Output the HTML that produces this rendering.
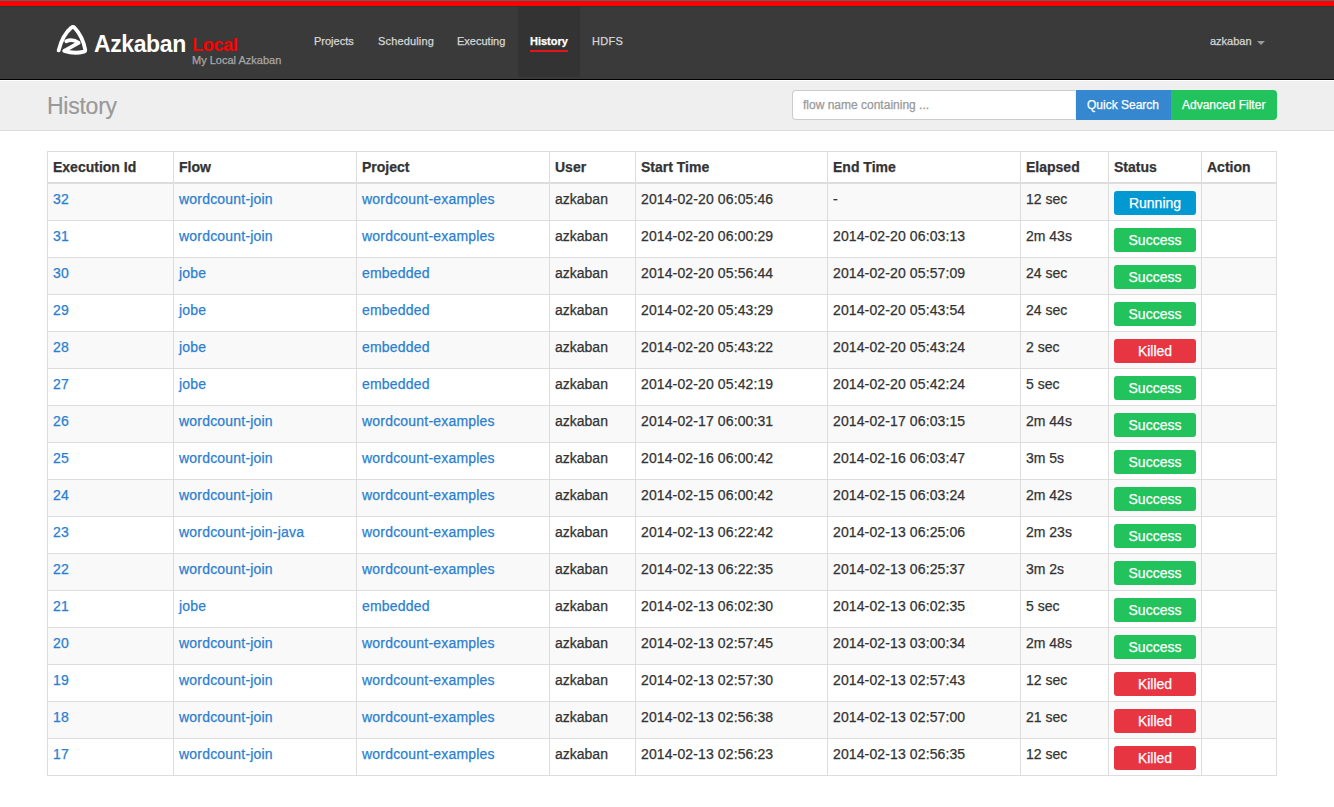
<!DOCTYPE html>
<html><head><meta charset="utf-8"><title>Azkaban History</title>
<style>
html,body{margin:0;padding:0;background:#fff;width:1334px;height:807px;overflow:hidden;position:relative;font-family:"Liberation Sans",sans-serif;}
.b{position:absolute}
.hl{left:47px;width:1230px;height:1px;background:#ddd}
.t{position:absolute;white-space:nowrap;font-size:14px;line-height:20px;-webkit-text-stroke:0.25px currentColor}
.th{font-weight:bold;color:#333;}
.a{color:#2a7fd0;letter-spacing:0.2px}
.d{color:#333}
.dt{letter-spacing:0.12px}
.lab{-webkit-text-stroke:0.25px currentColor;position:absolute;left:1114px;width:82px;height:24px;border-radius:3px;color:#fff;font-size:14px;line-height:24px;text-align:center;white-space:nowrap}
.nav{-webkit-text-stroke:0.25px currentColor;position:absolute;top:34px;font-size:11px;line-height:14px;color:#d6d6d6;white-space:nowrap}
</style></head><body>
<div class="b" style="left:0;top:0;width:1334px;height:1px;background:#506a6a"></div>
<div class="b" style="left:0;top:1px;width:1334px;height:5px;background:#ff0000"></div>
<div class="b" style="left:0;top:6px;width:1334px;height:1px;background:#263636"></div>
<div class="b" style="left:0;top:7px;width:1334px;height:72px;background:#3a3a3a"></div>
<div class="b" style="left:0;top:79px;width:1334px;height:1px;background:#000"></div>
<div class="b" style="left:0;top:80px;width:1334px;height:1px;background:#fff"></div>
<div class="b" style="left:0;top:81px;width:1334px;height:49px;background:#efefef"></div>
<div class="b" style="left:0;top:130px;width:1334px;height:1px;background:#ddd"></div>
<div class="b" style="left:518px;top:7px;width:62px;height:70px;background:#333"></div>
<div class="b" style="left:530px;top:50px;width:38px;height:2px;background:#e5141b"></div>
<svg class="b" style="left:0;top:0" width="100" height="70" viewBox="0 0 100 70">
<path d="M 58.6 50.4 C 60.8 42 64.8 33 71.2 27.8 Q 73 26.2 74.6 27.8 C 79.5 33 83.5 41 85.2 49.6 Q 85.5 51.2 83.8 51.6 Q 74.75 54.2 64.2 50.9 L 78.6 42.9 Q 72.5 38.4 66.3 41.2" fill="none" stroke="#fff" stroke-width="3.8" stroke-linecap="round" stroke-linejoin="round"/>
</svg>
<div class="t" style="left:94px;top:31px;font-size:23px;letter-spacing:-0.4px;line-height:26px;font-weight:bold;color:#fff;-webkit-text-stroke:0">Azkaban</div>
<div class="t" style="left:192px;top:35px;font-size:18px;letter-spacing:-0.3px;line-height:20px;font-weight:bold;color:#f00;-webkit-text-stroke:0">Local</div>
<div class="t" style="left:192px;top:53px;font-size:11px;line-height:14px;color:#a8a8a8">My Local Azkaban</div>
<div class="nav" style="left:314px">Projects</div>
<div class="nav" style="left:378px;letter-spacing:0.15px">Scheduling</div>
<div class="nav" style="left:457px">Executing</div>
<div class="nav" style="left:530px;color:#fff;font-weight:bold">History</div>
<div class="nav" style="left:592px;letter-spacing:0.3px">HDFS</div>
<div class="nav" style="left:1210px">azkaban</div>
<div class="b" style="left:1257px;top:41px;width:0;height:0;border-left:4px solid transparent;border-right:4px solid transparent;border-top:4px solid #999"></div>
<div class="t" style="left:47px;top:91px;font-size:23px;letter-spacing:-0.25px;line-height:30px;color:#999;-webkit-text-stroke:0.15px #999">History</div>
<div class="b" style="left:792px;top:90px;width:282px;height:28px;background:#fff;border:1px solid #ccc;border-right:0;border-radius:4px 0 0 4px"></div>
<div class="t" style="left:803px;top:97px;font-size:12px;line-height:16px;color:#999">flow name containing ...</div>
<div class="b" style="left:1076px;top:90px;width:95px;height:30px;background:#3588d0"></div>
<div class="b" style="left:1171px;top:90px;width:106px;height:30px;background:#22c25c;border-radius:0 4px 4px 0"></div>
<div class="t" style="left:1087px;top:97px;font-size:12px;line-height:16px;color:#fff">Quick Search</div>
<div class="t" style="left:1182px;top:97px;font-size:12px;line-height:16px;color:#fff">Advanced Filter</div>
<div class="b" style="left:48px;top:184px;width:1228px;height:36px;background:#f9f9f9"></div>
<div class="b hl" style="top:220px"></div>
<div class="b hl" style="top:257px"></div>
<div class="b" style="left:48px;top:258px;width:1228px;height:36px;background:#f9f9f9"></div>
<div class="b hl" style="top:294px"></div>
<div class="b hl" style="top:331px"></div>
<div class="b" style="left:48px;top:332px;width:1228px;height:36px;background:#f9f9f9"></div>
<div class="b hl" style="top:368px"></div>
<div class="b hl" style="top:405px"></div>
<div class="b" style="left:48px;top:406px;width:1228px;height:36px;background:#f9f9f9"></div>
<div class="b hl" style="top:442px"></div>
<div class="b hl" style="top:479px"></div>
<div class="b" style="left:48px;top:480px;width:1228px;height:36px;background:#f9f9f9"></div>
<div class="b hl" style="top:516px"></div>
<div class="b hl" style="top:553px"></div>
<div class="b" style="left:48px;top:554px;width:1228px;height:36px;background:#f9f9f9"></div>
<div class="b hl" style="top:590px"></div>
<div class="b hl" style="top:627px"></div>
<div class="b" style="left:48px;top:628px;width:1228px;height:36px;background:#f9f9f9"></div>
<div class="b hl" style="top:664px"></div>
<div class="b hl" style="top:701px"></div>
<div class="b" style="left:48px;top:702px;width:1228px;height:36px;background:#f9f9f9"></div>
<div class="b hl" style="top:738px"></div>
<div class="b hl" style="top:775px"></div>
<div class="b hl" style="top:151px"></div>
<div class="b hl" style="top:182px;height:2px"></div>
<div class="b" style="left:47px;top:151px;width:1px;height:625px;background:#ddd"></div>
<div class="b" style="left:173px;top:151px;width:1px;height:625px;background:#ddd"></div>
<div class="b" style="left:356px;top:151px;width:1px;height:625px;background:#ddd"></div>
<div class="b" style="left:549px;top:151px;width:1px;height:625px;background:#ddd"></div>
<div class="b" style="left:635px;top:151px;width:1px;height:625px;background:#ddd"></div>
<div class="b" style="left:827px;top:151px;width:1px;height:625px;background:#ddd"></div>
<div class="b" style="left:1020px;top:151px;width:1px;height:625px;background:#ddd"></div>
<div class="b" style="left:1108px;top:151px;width:1px;height:625px;background:#ddd"></div>
<div class="b" style="left:1201px;top:151px;width:1px;height:625px;background:#ddd"></div>
<div class="b" style="left:1276px;top:151px;width:1px;height:625px;background:#ddd"></div>
<div class="t th" style="left:53px;top:157px;">Execution Id</div>
<div class="t th" style="left:179px;top:157px;">Flow</div>
<div class="t th" style="left:362px;top:157px;">Project</div>
<div class="t th" style="left:555px;top:157px;">User</div>
<div class="t th" style="left:641px;top:157px;">Start Time</div>
<div class="t th" style="left:833px;top:157px;">End Time</div>
<div class="t th" style="left:1026px;top:157px;">Elapsed</div>
<div class="t th" style="left:1114px;top:157px;">Status</div>
<div class="t th" style="left:1207px;top:157px;">Action</div>
<div class="t a" style="left:53px;top:189px;">32</div>
<div class="t a" style="left:179px;top:189px;">wordcount-join</div>
<div class="t a" style="left:362px;top:189px;">wordcount-examples</div>
<div class="t d" style="left:555px;top:189px;">azkaban</div>
<div class="t d dt" style="left:641px;top:189px;">2014-02-20 06:05:46</div>
<div class="t d dt" style="left:833px;top:189px;">-</div>
<div class="t d" style="left:1026px;top:189px;">12 sec</div>
<div class="lab" style="top:191px;background:#0299d2">Running</div>
<div class="t a" style="left:53px;top:226px;">31</div>
<div class="t a" style="left:179px;top:226px;">wordcount-join</div>
<div class="t a" style="left:362px;top:226px;">wordcount-examples</div>
<div class="t d" style="left:555px;top:226px;">azkaban</div>
<div class="t d dt" style="left:641px;top:226px;">2014-02-20 06:00:29</div>
<div class="t d dt" style="left:833px;top:226px;">2014-02-20 06:03:13</div>
<div class="t d" style="left:1026px;top:226px;">2m 43s</div>
<div class="lab" style="top:228px;background:#22c25c">Success</div>
<div class="t a" style="left:53px;top:263px;">30</div>
<div class="t a" style="left:179px;top:263px;">jobe</div>
<div class="t a" style="left:362px;top:263px;">embedded</div>
<div class="t d" style="left:555px;top:263px;">azkaban</div>
<div class="t d dt" style="left:641px;top:263px;">2014-02-20 05:56:44</div>
<div class="t d dt" style="left:833px;top:263px;">2014-02-20 05:57:09</div>
<div class="t d" style="left:1026px;top:263px;">24 sec</div>
<div class="lab" style="top:265px;background:#22c25c">Success</div>
<div class="t a" style="left:53px;top:300px;">29</div>
<div class="t a" style="left:179px;top:300px;">jobe</div>
<div class="t a" style="left:362px;top:300px;">embedded</div>
<div class="t d" style="left:555px;top:300px;">azkaban</div>
<div class="t d dt" style="left:641px;top:300px;">2014-02-20 05:43:29</div>
<div class="t d dt" style="left:833px;top:300px;">2014-02-20 05:43:54</div>
<div class="t d" style="left:1026px;top:300px;">24 sec</div>
<div class="lab" style="top:302px;background:#22c25c">Success</div>
<div class="t a" style="left:53px;top:337px;">28</div>
<div class="t a" style="left:179px;top:337px;">jobe</div>
<div class="t a" style="left:362px;top:337px;">embedded</div>
<div class="t d" style="left:555px;top:337px;">azkaban</div>
<div class="t d dt" style="left:641px;top:337px;">2014-02-20 05:43:22</div>
<div class="t d dt" style="left:833px;top:337px;">2014-02-20 05:43:24</div>
<div class="t d" style="left:1026px;top:337px;">2 sec</div>
<div class="lab" style="top:339px;background:#e83542">Killed</div>
<div class="t a" style="left:53px;top:374px;">27</div>
<div class="t a" style="left:179px;top:374px;">jobe</div>
<div class="t a" style="left:362px;top:374px;">embedded</div>
<div class="t d" style="left:555px;top:374px;">azkaban</div>
<div class="t d dt" style="left:641px;top:374px;">2014-02-20 05:42:19</div>
<div class="t d dt" style="left:833px;top:374px;">2014-02-20 05:42:24</div>
<div class="t d" style="left:1026px;top:374px;">5 sec</div>
<div class="lab" style="top:376px;background:#22c25c">Success</div>
<div class="t a" style="left:53px;top:411px;">26</div>
<div class="t a" style="left:179px;top:411px;">wordcount-join</div>
<div class="t a" style="left:362px;top:411px;">wordcount-examples</div>
<div class="t d" style="left:555px;top:411px;">azkaban</div>
<div class="t d dt" style="left:641px;top:411px;">2014-02-17 06:00:31</div>
<div class="t d dt" style="left:833px;top:411px;">2014-02-17 06:03:15</div>
<div class="t d" style="left:1026px;top:411px;">2m 44s</div>
<div class="lab" style="top:413px;background:#22c25c">Success</div>
<div class="t a" style="left:53px;top:448px;">25</div>
<div class="t a" style="left:179px;top:448px;">wordcount-join</div>
<div class="t a" style="left:362px;top:448px;">wordcount-examples</div>
<div class="t d" style="left:555px;top:448px;">azkaban</div>
<div class="t d dt" style="left:641px;top:448px;">2014-02-16 06:00:42</div>
<div class="t d dt" style="left:833px;top:448px;">2014-02-16 06:03:47</div>
<div class="t d" style="left:1026px;top:448px;">3m 5s</div>
<div class="lab" style="top:450px;background:#22c25c">Success</div>
<div class="t a" style="left:53px;top:485px;">24</div>
<div class="t a" style="left:179px;top:485px;">wordcount-join</div>
<div class="t a" style="left:362px;top:485px;">wordcount-examples</div>
<div class="t d" style="left:555px;top:485px;">azkaban</div>
<div class="t d dt" style="left:641px;top:485px;">2014-02-15 06:00:42</div>
<div class="t d dt" style="left:833px;top:485px;">2014-02-15 06:03:24</div>
<div class="t d" style="left:1026px;top:485px;">2m 42s</div>
<div class="lab" style="top:487px;background:#22c25c">Success</div>
<div class="t a" style="left:53px;top:522px;">23</div>
<div class="t a" style="left:179px;top:522px;">wordcount-join-java</div>
<div class="t a" style="left:362px;top:522px;">wordcount-examples</div>
<div class="t d" style="left:555px;top:522px;">azkaban</div>
<div class="t d dt" style="left:641px;top:522px;">2014-02-13 06:22:42</div>
<div class="t d dt" style="left:833px;top:522px;">2014-02-13 06:25:06</div>
<div class="t d" style="left:1026px;top:522px;">2m 23s</div>
<div class="lab" style="top:524px;background:#22c25c">Success</div>
<div class="t a" style="left:53px;top:559px;">22</div>
<div class="t a" style="left:179px;top:559px;">wordcount-join</div>
<div class="t a" style="left:362px;top:559px;">wordcount-examples</div>
<div class="t d" style="left:555px;top:559px;">azkaban</div>
<div class="t d dt" style="left:641px;top:559px;">2014-02-13 06:22:35</div>
<div class="t d dt" style="left:833px;top:559px;">2014-02-13 06:25:37</div>
<div class="t d" style="left:1026px;top:559px;">3m 2s</div>
<div class="lab" style="top:561px;background:#22c25c">Success</div>
<div class="t a" style="left:53px;top:596px;">21</div>
<div class="t a" style="left:179px;top:596px;">jobe</div>
<div class="t a" style="left:362px;top:596px;">embedded</div>
<div class="t d" style="left:555px;top:596px;">azkaban</div>
<div class="t d dt" style="left:641px;top:596px;">2014-02-13 06:02:30</div>
<div class="t d dt" style="left:833px;top:596px;">2014-02-13 06:02:35</div>
<div class="t d" style="left:1026px;top:596px;">5 sec</div>
<div class="lab" style="top:598px;background:#22c25c">Success</div>
<div class="t a" style="left:53px;top:633px;">20</div>
<div class="t a" style="left:179px;top:633px;">wordcount-join</div>
<div class="t a" style="left:362px;top:633px;">wordcount-examples</div>
<div class="t d" style="left:555px;top:633px;">azkaban</div>
<div class="t d dt" style="left:641px;top:633px;">2014-02-13 02:57:45</div>
<div class="t d dt" style="left:833px;top:633px;">2014-02-13 03:00:34</div>
<div class="t d" style="left:1026px;top:633px;">2m 48s</div>
<div class="lab" style="top:635px;background:#22c25c">Success</div>
<div class="t a" style="left:53px;top:670px;">19</div>
<div class="t a" style="left:179px;top:670px;">wordcount-join</div>
<div class="t a" style="left:362px;top:670px;">wordcount-examples</div>
<div class="t d" style="left:555px;top:670px;">azkaban</div>
<div class="t d dt" style="left:641px;top:670px;">2014-02-13 02:57:30</div>
<div class="t d dt" style="left:833px;top:670px;">2014-02-13 02:57:43</div>
<div class="t d" style="left:1026px;top:670px;">12 sec</div>
<div class="lab" style="top:672px;background:#e83542">Killed</div>
<div class="t a" style="left:53px;top:707px;">18</div>
<div class="t a" style="left:179px;top:707px;">wordcount-join</div>
<div class="t a" style="left:362px;top:707px;">wordcount-examples</div>
<div class="t d" style="left:555px;top:707px;">azkaban</div>
<div class="t d dt" style="left:641px;top:707px;">2014-02-13 02:56:38</div>
<div class="t d dt" style="left:833px;top:707px;">2014-02-13 02:57:00</div>
<div class="t d" style="left:1026px;top:707px;">21 sec</div>
<div class="lab" style="top:709px;background:#e83542">Killed</div>
<div class="t a" style="left:53px;top:744px;">17</div>
<div class="t a" style="left:179px;top:744px;">wordcount-join</div>
<div class="t a" style="left:362px;top:744px;">wordcount-examples</div>
<div class="t d" style="left:555px;top:744px;">azkaban</div>
<div class="t d dt" style="left:641px;top:744px;">2014-02-13 02:56:23</div>
<div class="t d dt" style="left:833px;top:744px;">2014-02-13 02:56:35</div>
<div class="t d" style="left:1026px;top:744px;">12 sec</div>
<div class="lab" style="top:746px;background:#e83542">Killed</div>
</body></html>
